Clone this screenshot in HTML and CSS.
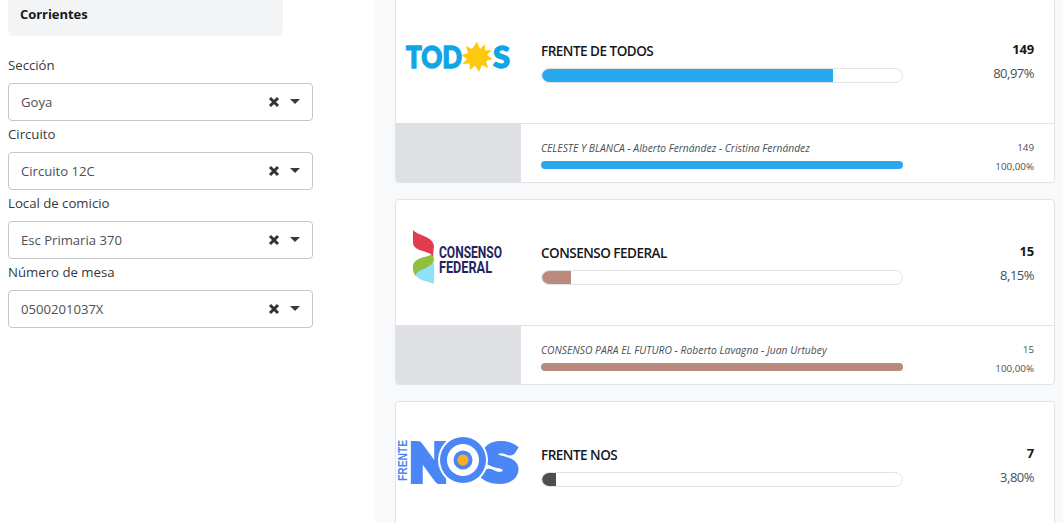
FILE: index.html
```html
<!DOCTYPE html>
<html lang="es">
<head>
<meta charset="utf-8">
<title>Resultados</title>
<link rel="stylesheet" href="styles.css">
</head>
<body>
<div class="page">
  <aside class="sidebar">
    <div class="province">Corrientes</div>
    <div class="filters">
      <div class="field">
        <label class="field-label">Sección</label>
        <div class="select"><span class="select-value">Goya</span>
          <svg class="ico-x" viewBox="0 0 12 12"><path d="M2 2 L10 10 M10 2 L2 10"/></svg><span class="caret"></span></div>
      </div>
      <div class="field">
        <label class="field-label">Circuito</label>
        <div class="select"><span class="select-value">Circuito 12C</span>
          <svg class="ico-x" viewBox="0 0 12 12"><path d="M2 2 L10 10 M10 2 L2 10"/></svg><span class="caret"></span></div>
      </div>
      <div class="field">
        <label class="field-label">Local de comicio</label>
        <div class="select"><span class="select-value">Esc Primaria 370</span>
          <svg class="ico-x" viewBox="0 0 12 12"><path d="M2 2 L10 10 M10 2 L2 10"/></svg><span class="caret"></span></div>
      </div>
      <div class="field">
        <label class="field-label">Número de mesa</label>
        <div class="select"><span class="select-value">0500201037X</span>
          <svg class="ico-x" viewBox="0 0 12 12"><path d="M2 2 L10 10 M10 2 L2 10"/></svg><span class="caret"></span></div>
      </div>
    </div>
  </aside>

  <main class="results">
    <section class="card">
      <div class="row row-main">
        <div class="logo">
          <svg class="logo-svg" viewBox="0 0 126 126">
            <text class="lg-todos" x="10" y="70" textLength="56" lengthAdjust="spacingAndGlyphs">TOD</text>
            <g transform="translate(81 59)">
              <polygon class="lg-sun" points="0,-15.5 3,-8 8,-13 8,-6.5 14.5,-7 10,-2 15.5,2 9,4 11,11 5,8 2,15 -2,8.500 -7,13 -7.500,6.500 -14.500,7 -10,2 -15.500,-2 -9,-4 -11,-11 -5,-8"/>
              <circle class="lg-sun" r="9"/>
            </g>
            <text class="lg-todos" x="97" y="70" textLength="17" lengthAdjust="spacingAndGlyphs">S</text>
          </svg>
        </div>
        <div class="info">
          <div class="name">FRENTE DE TODOS</div>
          <div class="track"><div class="fill c-blue" style="width:80.97%"></div></div>
        </div>
        <div class="nums">
          <div class="votes">149</div>
          <div class="pct">80,97%</div>
        </div>
      </div>
      <div class="row row-sub">
        <div class="sub-blank"></div>
        <div class="sub-info">
          <div class="sub-name">CELESTE Y BLANCA - Alberto Fernández - Cristina Fernández</div>
          <div class="sub-bar c-blue"></div>
        </div>
        <div class="sub-nums"><div>149</div><div>100,00%</div></div>
      </div>
    </section>

    <section class="card">
      <div class="row row-main">
        <div class="logo">
          <svg class="logo-svg" viewBox="0 0 126 126">
            <path fill="#8fe0fb" d="M18 72 C20 68 34 70 37 62 C39 66 38 72 38 84 C30 80 22 82 18 72 Z"/>
            <path fill="#8fc13e" d="M37 53 C34 58 17 56 17 67 C17 72 18 74 20 76 C20 68 36 70 38 60 Z"/>
            <path fill="#e23c50" d="M17 30 C22 36 37 36 38 46 L37 56 C32 50 17 52 17 42 Z"/>
            <text class="lg-cons" x="43" y="58" textLength="63" lengthAdjust="spacingAndGlyphs">CONSENSO</text>
            <text class="lg-cons" x="43" y="73" textLength="53" lengthAdjust="spacingAndGlyphs">FEDERAL</text>
          </svg>
        </div>
        <div class="info">
          <div class="name">CONSENSO FEDERAL</div>
          <div class="track"><div class="fill c-rose" style="width:8.15%"></div></div>
        </div>
        <div class="nums">
          <div class="votes">15</div>
          <div class="pct">8,15%</div>
        </div>
      </div>
      <div class="row row-sub">
        <div class="sub-blank"></div>
        <div class="sub-info">
          <div class="sub-name sub-name-wide">CONSENSO PARA EL FUTURO - Roberto Lavagna - Juan Urtubey</div>
          <div class="sub-bar c-rose"></div>
        </div>
        <div class="sub-nums"><div>15</div><div>100,00%</div></div>
      </div>
    </section>

    <section class="card">
      <div class="row row-main">
        <div class="logo">
          <svg class="logo-svg" viewBox="0 0 126 126">
            <text class="lg-frente" transform="translate(10.500 79) rotate(-90)" textLength="41" lengthAdjust="spacingAndGlyphs">FRENTE</text>
            <text class="lg-nos" x="14" y="79" textLength="37" lengthAdjust="spacingAndGlyphs">N</text>
            <text class="lg-nos" x="87" y="79" textLength="34" lengthAdjust="spacingAndGlyphs">S</text>
            <circle cx="67" cy="58" r="25" fill="#fff"/>
            <circle cx="67" cy="58" r="23" fill="#4a86f5"/>
            <circle cx="67" cy="58" r="16" fill="#fff"/>
            <circle cx="67" cy="58" r="9.500" fill="#4a86f5"/>
            <circle cx="67" cy="58" r="5.500" fill="#f6b022"/>
          </svg>
        </div>
        <div class="info">
          <div class="name">FRENTE NOS</div>
          <div class="track"><div class="fill c-dark" style="width:3.8%"></div></div>
        </div>
        <div class="nums">
          <div class="votes">7</div>
          <div class="pct">3,80%</div>
        </div>
      </div>
    </section>
  </main>
</div>
</body>
</html>
```
FILE: styles.css
```css
* { box-sizing: border-box; }
html, body { margin: 0; height: 100%; overflow: hidden; }
body {
  font-family: "Open Sans", "Noto Sans", sans-serif;
  color: #212529;
  background: #fff;
}
.page { display: flex; height: 523px; overflow: hidden; }

.sidebar { width: 375px; flex: none; padding: 0 62px 0 8px; }
.province {
  width: 275px;
  height: 36px;
  padding: 5px 12px 0;
  background: #f3f4f6;
  border-radius: 0 0 6px 6px;
  font-size: 13px;
  line-height: 18px;
  font-weight: 700;
  color: #16181b;
  letter-spacing: -0.05px;
}
.filters { display: flex; flex-direction: column; padding-top: 19px; }
.field { height: 69px; }
.field-label { display: block; height: 28px; font-size: 13.2px; line-height: 20px; color: #343a40; }
.select {
  width: 305px;
  height: 38px;
  display: flex;
  align-items: center;
  padding: 0 12px;
  border: 1px solid #c6c6c6;
  border-radius: 4px;
  background: #fff;
}
.select-value { flex: 1; font-size: 13.1px; color: #495057; }
.ico-x { width: 12px; height: 12px; fill: none; stroke: #333; stroke-width: 3; margin: 0 10px 0 -1px; }
.caret {
  width: 0; height: 0;
  border-left: 5px solid transparent;
  border-right: 5px solid transparent;
  border-top: 5px solid #343a40;
  margin-bottom: 2px;
}

.results {
  flex: 1;
  min-width: 0;
  background: #f8f9fa;
  padding: 0 8px 0 20px;
  overflow: hidden;
  display: flex;
  flex-direction: column;
  gap: 16px;
}
.card {
  flex: none;
  margin: 0;
  background: #fff;
  border: 1px solid #e1e3e6;
  border-radius: 4px;
  overflow: hidden;
}
.card:first-child { margin-top: -3px; }
.row { display: flex; }
.row-main { height: 125px; }
.row-sub { height: 59px; border-top: 1px solid #e1e3e6; margin-left: 125px; position: relative; }
.logo { width: 125px; flex: none; }
.logo-svg { display: block; width: 126px; height: 126px; }
.lg-todos { font: 900 31px "Lato", sans-serif; fill: #12a5e6; stroke: #12a5e6; stroke-width: 1.4px; }
.lg-sun { fill: #fdc90f; }
.lg-cons { font: 700 16px "Roboto", sans-serif; fill: #1f2560; }
.lg-frente { font: 700 12px "Liberation Sans", sans-serif; fill: #4a86f5; }
.lg-nos { font: 900 52px "Lato", sans-serif; fill: #4a86f5; stroke: #4a86f5; stroke-width: 6px; }

.info { width: 362px; margin-left: 20px; flex: none; padding-top: 45px; }
.name { font-size: 13.5px; line-height: 16px; font-weight: 600; letter-spacing: -0.5px; color: #16181b; }
.track {
  height: 15px;
  margin-top: 9px;
  background: #fff;
  border: 1px solid #e1e3e6;
  border-radius: 8px;
  overflow: hidden;
}
.fill { height: 100%; border-radius: 8px 0 0 8px; }
.c-blue { background: #2aa8ee; }
.c-rose { background: #b98a7e; }
.c-dark { background: #4f4f4f; }
.nums { flex: 1; text-align: right; padding: 42px 20px 0 0; }
.votes { font-size: 13px; line-height: 18px; font-weight: 700; letter-spacing: -0.2px; color: #16181b; }
.pct { font-size: 13px; line-height: 18px; margin-top: 6px; letter-spacing: -0.5px; color: #495057; }

.sub-blank {
  position: absolute;
  left: -126px;
  top: -1px;
  width: 126px;
  height: 60px;
  background: #dee0e3;
}
.sub-info { width: 362px; margin-left: 20px; flex: none; padding-top: 17px; }
.sub-name { font-size: 10.3px; line-height: 14px; font-style: italic; font-weight: 400; color: #495057; }
.sub-name-wide { letter-spacing: 0.04px; }
.sub-bar { height: 8px; margin-top: 6px; border-radius: 4px; }
.sub-nums { flex: 1; text-align: right; padding: 17px 20px 0 0; font-size: 9.8px; line-height: 14px; color: #495057; }
.sub-nums div + div { margin-top: 5px; }
```
